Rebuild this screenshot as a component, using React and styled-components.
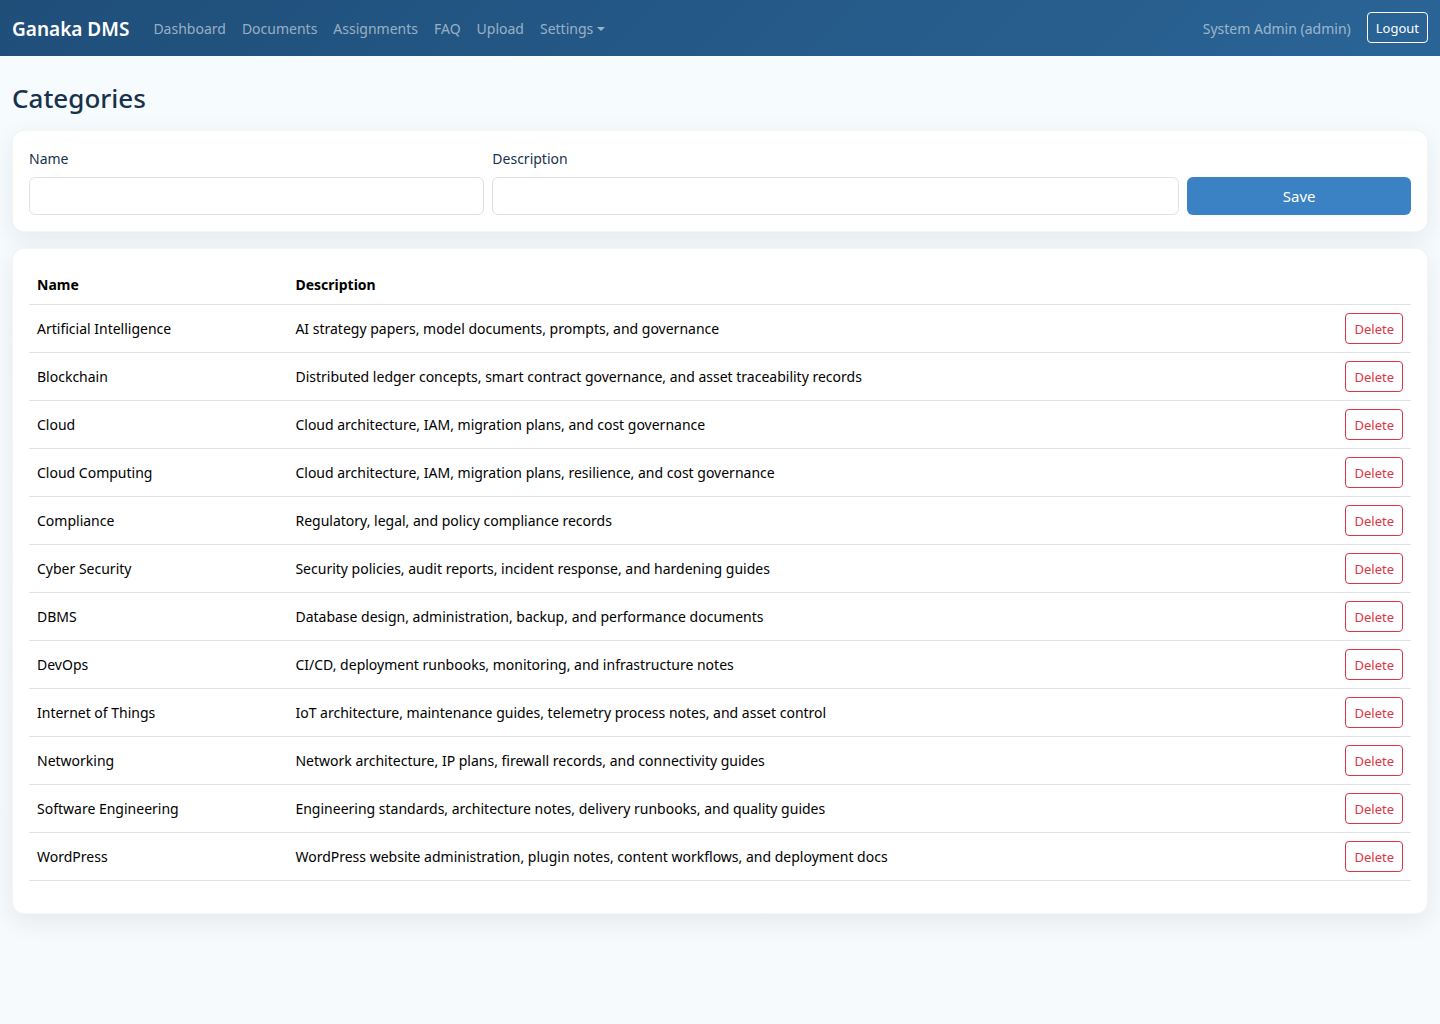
import React, { useState } from 'react';
import styled, { createGlobalStyle } from 'styled-components';

const GlobalStyle = createGlobalStyle`
  *, *::before, *::after {
    box-sizing: border-box;
  }

  body {
    margin: 0;
    min-height: 100vh;
    background: linear-gradient(180deg, #f6fbfe 0%, #f7fafc 100%);
    color: #17324d;
    font-family: "Noto Sans", "Open Sans", sans-serif;
    font-size: 14px;
    line-height: 22px;
  }

  button, input {
    font-family: inherit;
  }
`;

const Navbar = styled.nav`
  display: flex;
  align-items: center;
  min-height: 56px;
  padding: 8px 12px 9px;
  background: linear-gradient(135deg, #1f4e79, #2a6496);
`;

const Brand = styled.a`
  margin-right: 24px;
  padding-top: 4px;
  color: #fff;
  font-size: 19px;
  font-weight: 600;
  line-height: 31px;
  text-decoration: none;
`;

const NavList = styled.ul`
  display: flex;
  flex: 1;
  gap: 16px;
  margin: 0;
  padding: 0;
  list-style: none;
`;

const NavLink = styled.a`
  display: flex;
  align-items: center;
  gap: 4px;
  padding-top: 2px;
  color: rgba(255, 255, 255, 0.55);
  line-height: 23px;
  text-decoration: none;

  &:hover {
    color: rgba(255, 255, 255, 0.75);
  }
`;

const Caret = styled.span`
  border-top: 4px solid currentColor;
  border-right: 4px solid transparent;
  border-left: 4px solid transparent;
`;

const UserName = styled.span`
  margin-right: 16px;
  padding-top: 2px;
  color: rgba(255, 255, 255, 0.55);
  line-height: 23px;
`;

const SmallButton = styled.button`
  padding: 5px 8px 3px;
  border: 1px solid ${({ $color }) => $color};
  border-radius: 4px;
  background: transparent;
  color: ${({ $color }) => $color};
  font-size: 13px;
  line-height: 21px;
  cursor: pointer;
`;

const Main = styled.main`
  padding: 24px 12px;
`;

const Title = styled.h1`
  margin: 0 0 14px;
  font-size: 26px;
  font-weight: 500;
  line-height: 36px;
`;

const Card = styled.section`
  margin-bottom: 16px;
  padding: 16px;
  border: 1px solid rgba(31, 41, 55, 0.05);
  border-radius: 12px;
  background: #fff;
  box-shadow: 0 8px 24px rgba(31, 41, 55, 0.08);
`;

const Form = styled.form`
  display: grid;
  grid-template-columns: repeat(12, 1fr);
  align-items: end;
  gap: 8px;
`;

const Field = styled.div`
  grid-column: span ${({ $span }) => $span};
`;

const Label = styled.label`
  display: block;
  margin-bottom: 6px;
  line-height: 24px;
`;

const Input = styled.input`
  display: block;
  width: 100%;
  height: 38px;
  padding: 6px 12px;
  border: 1px solid #dee2e6;
  border-radius: 6px;
  background: #fff;
  color: #212529;
  font-size: 15px;
`;

const SaveButton = styled.button`
  display: block;
  width: 100%;
  height: 38px;
  border: 0;
  border-radius: 6px;
  background: #3b82c4;
  color: #fff;
  font-size: 15px;
  cursor: pointer;
`;

const Table = styled.table`
  width: 100%;
  margin-bottom: 16px;
  border-spacing: 0;
  table-layout: fixed;
  color: #000;
`;

const HeadCell = styled.th`
  width: ${({ $width }) => $width || 'auto'};
  padding: 8px;
  border-bottom: 1px solid #dee2e6;
  font-weight: 700;
  line-height: 23px;
  text-align: left;
`;

const Cell = styled.td`
  padding: 8px;
  border-bottom: 1px solid #dee2e6;
  text-align: ${({ $align }) => $align || 'left'};
  vertical-align: middle;

  ${SmallButton} {
    display: inline-block;
    vertical-align: top;
  }
`;

const links = ['Dashboard', 'Documents', 'Assignments', 'FAQ', 'Upload'];

const initialCategories = [
  { name: 'Artificial Intelligence', description: 'AI strategy papers, model documents, prompts, and governance' },
  { name: 'Blockchain', description: 'Distributed ledger concepts, smart contract governance, and asset traceability records' },
  { name: 'Cloud', description: 'Cloud architecture, IAM, migration plans, and cost governance' },
  { name: 'Cloud Computing', description: 'Cloud architecture, IAM, migration plans, resilience, and cost governance' },
  { name: 'Compliance', description: 'Regulatory, legal, and policy compliance records' },
  { name: 'Cyber Security', description: 'Security policies, audit reports, incident response, and hardening guides' },
  { name: 'DBMS', description: 'Database design, administration, backup, and performance documents' },
  { name: 'DevOps', description: 'CI/CD, deployment runbooks, monitoring, and infrastructure notes' },
  { name: 'Internet of Things', description: 'IoT architecture, maintenance guides, telemetry process notes, and asset control' },
  { name: 'Networking', description: 'Network architecture, IP plans, firewall records, and connectivity guides' },
  { name: 'Software Engineering', description: 'Engineering standards, architecture notes, delivery runbooks, and quality guides' },
  { name: 'WordPress', description: 'WordPress website administration, plugin notes, content workflows, and deployment docs' },
];

const Header = () => (
  <Navbar>
    <Brand href="#">Ganaka DMS</Brand>
    <NavList>
      {links.map(link => (
        <li key={link}>
          <NavLink href="#">{link}</NavLink>
        </li>
      ))}
      <li>
        <NavLink href="#" aria-haspopup="true">
          Settings
          <Caret />
        </NavLink>
      </li>
    </NavList>
    <UserName>System Admin (admin)</UserName>
    <SmallButton type="button" $color="#fff">Logout</SmallButton>
  </Navbar>
);

const CategoryForm = ({ onSave }) => {
  const [name, setName] = useState('');
  const [description, setDescription] = useState('');

  const handleSubmit = e => {
    e.preventDefault();
    if (!name.trim()) return;
    onSave({ name, description });
    setName('');
    setDescription('');
  };

  return (
    <Form onSubmit={handleSubmit}>
      <Field $span={4}>
        <Label htmlFor="name">Name</Label>
        <Input id="name" value={name} onChange={e => setName(e.target.value)} />
      </Field>
      <Field $span={6}>
        <Label htmlFor="description">Description</Label>
        <Input id="description" value={description} onChange={e => setDescription(e.target.value)} />
      </Field>
      <Field $span={2}>
        <SaveButton type="submit">Save</SaveButton>
      </Field>
    </Form>
  );
};

const App = () => {
  const [categories, setCategories] = useState(initialCategories);

  const addCategory = category => setCategories(prev => [...prev, category]);
  const removeCategory = category => setCategories(prev => prev.filter(c => c !== category));

  return (
    <>
      <GlobalStyle />
      <Header />
      <Main>
        <Title>Categories</Title>
        <Card>
          <CategoryForm onSave={addCategory} />
        </Card>
        <Card>
          <Table>
            <thead>
              <tr>
                <HeadCell $width="18.7%">Name</HeadCell>
                <HeadCell>Description</HeadCell>
                <HeadCell $width="80px" aria-label="Actions" />
              </tr>
            </thead>
            <tbody>
              {categories.map(category => (
                <tr key={category.name}>
                  <Cell>{category.name}</Cell>
                  <Cell>{category.description}</Cell>
                  <Cell $align="right">
                    <SmallButton type="button" $color="#dc3545" onClick={() => removeCategory(category)}>
                      Delete
                    </SmallButton>
                  </Cell>
                </tr>
              ))}
            </tbody>
          </Table>
        </Card>
      </Main>
    </>
  );
};

export default App;
